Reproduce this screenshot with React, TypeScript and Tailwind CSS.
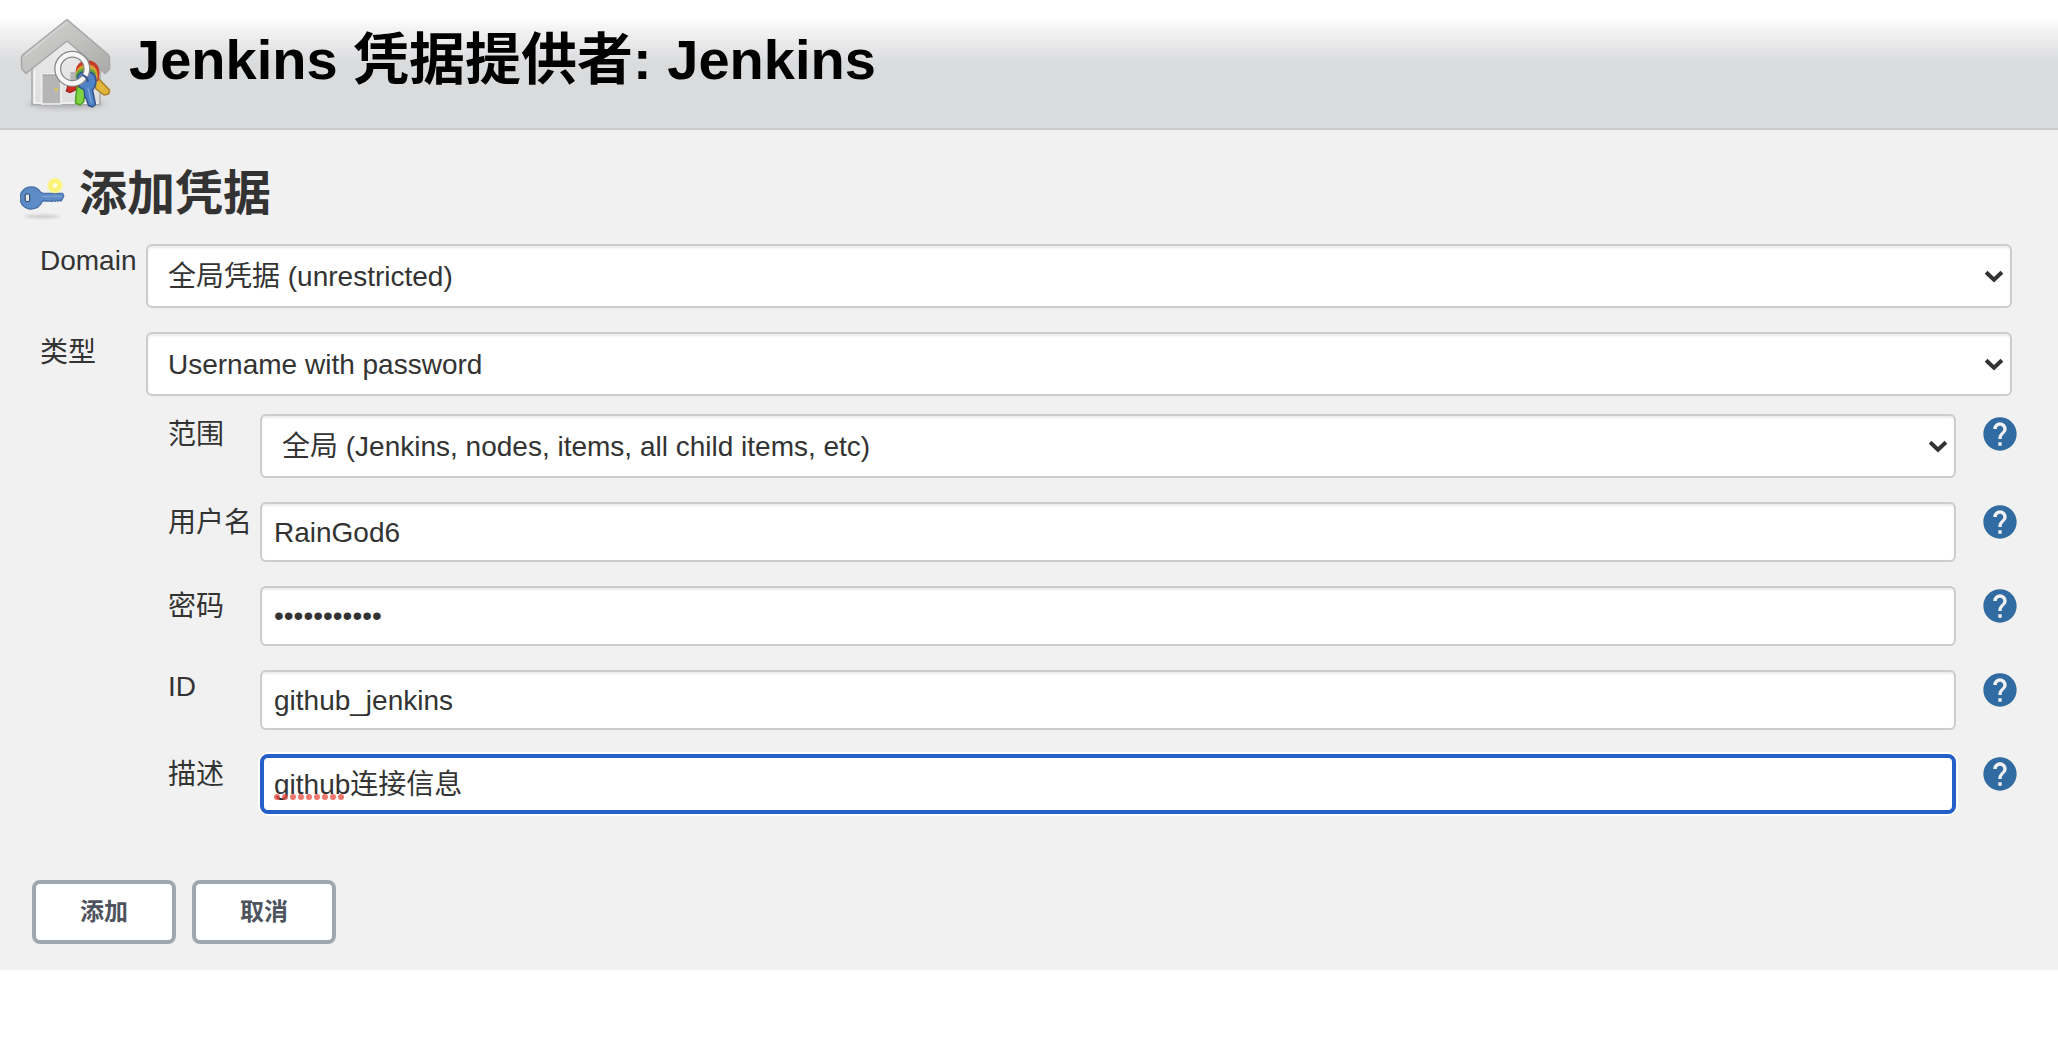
import type { ReactNode } from 'react';

function HomeKeysIcon() {
  return (
    <svg className="block size-24 shrink-0" viewBox="0 0 96 96">
      <defs>
        <linearGradient id="roof" x1="0" y1="0" x2="1" y2="1">
          <stop offset="0" stopColor="#d2d2d1" />
          <stop offset="0.5" stopColor="#c2c2c1" />
          <stop offset="1" stopColor="#a9a9a8" />
        </linearGradient>
        <linearGradient id="wall" x1="0" y1="0" x2="0" y2="1">
          <stop offset="0" stopColor="#ececec" />
          <stop offset="1" stopColor="#dedede" />
        </linearGradient>
        <filter id="soft" x="-20%" y="-60%" width="140%" height="220%">
          <feGaussianBlur stdDeviation="2" />
        </filter>
        <filter id="fine">
          <feGaussianBlur stdDeviation="0.7" />
        </filter>
      </defs>
      <ellipse cx="49" cy="88" rx="38" ry="4.500" fill="#8d8e90" opacity="0.5" filter="url(#soft)" />
      <g filter="url(#fine)">
        <path d="M15 50 L50 22 L83 50 V88.500 H15Z" fill="url(#wall)" stroke="#a9a9a9" strokeWidth="1.500" />
        <path d="M17.500 55 V87 H81" fill="none" stroke="#f6f6f6" strokeWidth="1.600" />
        <path d="M24.700 88 V58 H44 V88Z" fill="#b4b5b4" stroke="#f0f0f0" strokeWidth="1.600" />
        <path d="M25 59 H44" stroke="#a0a0a0" strokeWidth="1" />
        <path d="M53.500 56 H76 V72 H53.500Z" fill="#b5b5b6" />
        <circle cx="39.200" cy="73.500" r="1.800" fill="#d8c15e" />
        <path d="M50 3.500 L6 38.500 Q4.300 40 4.300 43 L4.800 53 L9 57.500 L50 25 L88 57.500 L92.500 53 V42 Q92.500 40 90.500 38Z" fill="url(#roof)" stroke="#a6a6a6" strokeWidth="1.500" strokeLinejoin="round" />
        <path d="M50 6 L8 40" stroke="#d8d8d8" strokeWidth="1.300" />
        <path d="M58 67.500 L51 69.500 L49.500 75 L53 76.500 L58 74 L65 70Z" fill="#d52c23" stroke="#a32722" strokeWidth="1.500" />
        <path d="M77 64 L81 62 L92.500 74 L91.500 78 L87 79 L79 73Z" fill="#e2b53b" stroke="#a98128" strokeWidth="1.500" strokeLinejoin="round" />
        <path d="M60 71 L69 72 L66.500 86 L63 89 L58.500 87 L59 80Z" fill="#7ed342" stroke="#4d9d28" strokeWidth="1.500" strokeLinejoin="round" />
        <path d="M60.500 56 Q61.500 46.500 71 46.500 Q80 47 80.500 57 L79.500 65" fill="none" stroke="#c93a28" strokeWidth="4" />
        <path d="M60.500 58 Q61.500 50.500 70.500 50 Q78.500 50.500 79 59 L78.500 64" fill="none" stroke="#d7a32f" strokeWidth="3.500" />
        <path d="M60 62 Q60.500 54 69.500 53.500 Q75.500 53.500 77.500 58.500" fill="none" stroke="#5da63a" strokeWidth="3.500" />
        <path d="M60.500 65 Q59.500 56 68.500 55.500 Q79 55.500 79 65 Q79 70 75.500 74 L78.500 88.500 L75.500 91 L71.500 89.500 L69.500 83 L68 81 L67 73.500 Q61 72 60.500 65Z" fill="#5083c8" stroke="#33568c" strokeWidth="1.500" strokeLinejoin="round" />
        <path d="M71 72 L74.500 87" stroke="#7da5dc" strokeWidth="1.200" />
        <ellipse cx="55.300" cy="52.800" rx="14.600" ry="14.600" fill="none" stroke="#868686" strokeWidth="7" />
        <ellipse cx="55.300" cy="52.800" rx="14.600" ry="14.600" fill="none" stroke="#f7f7f7" strokeWidth="4.500" />
        <path d="M71 66 Q70 60 65 59" fill="none" stroke="#33568c" strokeWidth="2" />
      </g>
    </svg>
  );
}

function KeyIcon() {
  return (
    <svg className="block size-12 shrink-0" viewBox="0 0 48 48">
      <defs>
        <filter id="key-shadow" x="-20%" y="-80%" width="140%" height="260%">
          <feGaussianBlur stdDeviation="1.400" />
        </filter>
        <filter id="key-soft">
          <feGaussianBlur stdDeviation="0.700" />
        </filter>
        <radialGradient id="glow">
          <stop offset="0" stopColor="#fffff5" />
          <stop offset="0.200" stopColor="#fffde0" />
          <stop offset="0.400" stopColor="#fbf26a" />
          <stop offset="0.750" stopColor="#fcf585" />
          <stop offset="1" stopColor="#fcf585" stopOpacity="0" />
        </radialGradient>
      </defs>
      <ellipse cx="22" cy="43.500" rx="18" ry="1.500" fill="#c2c2c2" filter="url(#key-shadow)" />
      <g filter="url(#key-soft)">
        <path d="M11 14 Q17 14 20.500 19 L23 20.300 H42.500 L43.800 22.500 L42.500 26 L41 28 L39.500 27 L38 28.500 L36.500 27.300 L35 28.500 L33.500 27.300 L32 28.500 L30 28 H22.500 Q19 36 11 36 A11 11 0 0 1 11 14Z" fill="#5d8bc6" stroke="#4a72a8" strokeWidth="1.300" />
        <path d="M22 23.500 H41.500" stroke="#7aa0d2" strokeWidth="1.400" />
        <rect x="5.200" y="21" width="4.500" height="7.500" rx="1.500" fill="#e8e8e8" stroke="#334e74" strokeWidth="1.200" />
      </g>
      <circle cx="35" cy="12.500" r="8.500" fill="url(#glow)" />
    </svg>
  );
}

function HelpIcon() {
  return (
    <svg className="block size-10 shrink-0" viewBox="0 0 24 24" fill="#306ba1">
      <path d="M12 2C6.480 2 2 6.480 2 12s4.480 10 10 10 10-4.480 10-10S17.520 2 12 2zm1 17h-2v-2h2v2zm2.070-7.750l-.9.920C13.450 12.900 13 13.500 13 15h-2v-.5c0-1.100.45-2.100 1.170-2.830l1.240-1.260c.37-.36.59-.86.59-1.410 0-1.100-.9-2-2-2s-2 .9-2 2H8c0-2.210 1.790-4 4-4s4 1.790 4 4c0 .88-.36 1.680-.93 2.250z" />
    </svg>
  );
}

function Chevron() {
  return (
    <svg className="ml-auto block h-[14px] w-5 shrink-0" viewBox="0 0 20 14" fill="none" stroke="#333333" strokeWidth="4">
      <path d="M2.100 2.300 L10 9.700 L17.900 2.300" />
    </svg>
  );
}

function Select({ children }: { children: ReactNode }) {
  return (
    <div className="flex h-16 min-w-0 flex-1 items-center rounded-md border-2 border-[#cccccc] bg-white pt-px pr-[6px] pl-5 shadow-[inset_0_2px_2px_rgba(0,0,0,0.075)]">
      <span className="whitespace-nowrap pt-px">{children}</span>
      <Chevron />
    </div>
  );
}

function Input({ children, focused = false }: { children: ReactNode; focused?: boolean }) {
  return focused ? (
    <div className="flex h-[60px] min-w-0 flex-1 items-center rounded-lg border-4 border-[#2560c8] bg-white pt-[2px] pl-[10px] shadow-[0_0_0_2px_#ffffff]">
      {children}
    </div>
  ) : (
    <div className="flex h-[60px] min-w-0 flex-1 items-center rounded-md border-2 border-[#cccccc] bg-white pt-[2px] pl-3 shadow-[inset_0_2px_2px_rgba(0,0,0,0.075)]">
      {children}
    </div>
  );
}

function Field({ label, latin = false, children }: { label: string; latin?: boolean; children: ReactNode }) {
  return (
    <div className="flex items-start pr-[38px] pl-[168px]">
      <div className={latin ? 'w-[92px] shrink-0 leading-[34px]' : 'w-[92px] shrink-0 whitespace-nowrap leading-[42px]'}>{label}</div>
      {children}
      <div className="ml-6">
        <HelpIcon />
      </div>
    </div>
  );
}

function Button({ children }: { children: ReactNode }) {
  return (
    <button className="flex h-16 w-36 items-center justify-center rounded-lg border-4 border-[#9ea7ae] bg-white text-2xl font-bold text-[#4d545d]">
      {children}
    </button>
  );
}

function Misspelled({ children }: { children: ReactNode }) {
  return (
    <span className="relative">
      {children}
      <svg className="absolute top-[25px] left-0 h-[6px] w-[72px]" viewBox="0 0 72 6" fill="#e8493c" fillOpacity="0.750">
        {[3, 11, 19, 27, 35, 43, 51, 59, 67].map((x) => (
          <circle key={x} cx={x} cy="3" r="3" />
        ))}
      </svg>
    </span>
  );
}

export default function App() {
  return (
    <div className="min-h-[1058px] bg-white font-['Liberation_Sans','Noto_Sans_CJK_SC',sans-serif] text-[28px] leading-8 text-[#333333]">
      <header className="flex h-[130px] border-b-2 border-[#cccccc] bg-[linear-gradient(to_bottom,#ffffff_18px,#f4f4f4_28px,#dadbdd_64px)] pt-4 pl-[17px] text-black">
        <HomeKeysIcon />
        <h1 className="ml-4 pt-3 text-[56px] leading-[64px] font-bold">Jenkins 凭据提供者: Jenkins</h1>
      </header>
      <main className="flex h-[840px] flex-col bg-[#f1f1f1]">
        <div className="mt-[43px] flex h-[71px] pl-5">
          <KeyIcon />
          <h2 className="ml-[11px] text-[48px] leading-[42px] font-bold">添加凭据</h2>
        </div>
        <div className="flex items-start pr-[46px] pl-10">
          <div className="w-[106px] shrink-0 leading-[34px]">Domain</div>
          <Select>全局凭据 (unrestricted)</Select>
        </div>
        <div className="mt-6 flex items-start pr-[46px] pl-10">
          <div className="w-[106px] shrink-0 leading-[42px]">类型</div>
          <Select>Username with password</Select>
        </div>
        <div className="mt-[18px] flex flex-col gap-6">
          <Field label="范围">
            <Select>全局 (Jenkins, nodes, items, all child items, etc)</Select>
          </Field>
          <Field label="用户名">
            <Input>RainGod6</Input>
          </Field>
          <Field label="密码">
            <Input>
              <span className="pb-[2px]">•••••••••••</span>
            </Input>
          </Field>
          <Field label="ID" latin>
            <Input>github_jenkins</Input>
          </Field>
          <Field label="描述">
            <Input focused>
              <span>
                <Misspelled>github</Misspelled>连接信息
              </span>
            </Input>
          </Field>
        </div>
        <div className="mt-[66px] flex gap-4 pl-8">
          <Button>添加</Button>
          <Button>取消</Button>
        </div>
      </main>
    </div>
  );
}
